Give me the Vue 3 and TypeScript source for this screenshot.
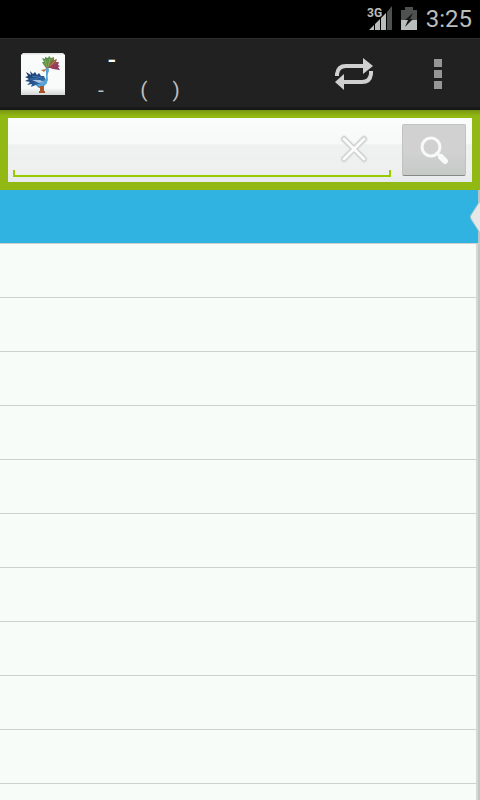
<script setup lang="ts">
import { ref } from 'vue'

const query = ref('')
const selected = ref(0)
const rows = Array.from({ length: 12 }, (_, i) => i)
const title = '      -'
const subtitle = '     -       (    \u2009)'
</script>

<template>
  <div class="screen">
    <header class="status">
      <svg class="signal" width="26" height="26" viewBox="0 0 26 26">
        <path d="M2 24 L7 19 V24Z M8 18 L13 13 V24 H8Z M14 12 L19 7 V24 H14Z" fill="#b9bebc" />
        <path d="M20 6 L25 0 V24 H20Z" fill="#4d5250" />
        <text x="0" y="11">3G</text>
      </svg>
      <svg class="battery" width="16" height="24" viewBox="0 0 16 24">
        <path d="M4 0 H12 V3 H16 V13 H0 V3 H4Z" fill="#4d5250" />
        <path d="M0 13 H16 V23 H0Z" fill="#b9bebc" />
        <path d="M12 6 L4 13 H7 L4 20 L12 12 H9Z" fill="#161816" />
      </svg>
      <time class="clock">3:25</time>
    </header>

    <nav class="bar">
      <svg class="logo" width="44" height="44" viewBox="0 0 44 44">
        <defs>
          <linearGradient id="tile" x1="0" y1="0" x2="0" y2="1">
            <stop offset="0" stop-color="#d8dbd9" />
            <stop offset=".06" stop-color="#fafcfb" />
            <stop offset=".84" stop-color="#f8faf9" />
            <stop offset="1" stop-color="#d2d5d5" />
          </linearGradient>
          <linearGradient id="crest" x1="0" y1="0" x2="1" y2="1">
            <stop offset="0" stop-color="#4f7d4a" />
            <stop offset=".35" stop-color="#5f9a48" />
            <stop offset=".55" stop-color="#9a5a48" />
            <stop offset="1" stop-color="#7c2468" />
          </linearGradient>
          <linearGradient id="body" x1="0" y1="0" x2="1" y2="1">
            <stop offset="0" stop-color="#1b2f5e" />
            <stop offset=".55" stop-color="#27568f" />
            <stop offset="1" stop-color="#4a9bd0" />
          </linearGradient>
        </defs>
        <path d="M2 1 H42 L44 3 V43 H0 V3Z" fill="url(#tile)" />
        <path d="M25 16 L22 12 L21 10 L23 10 L21 6 L24 7 L24 5 L27 6 L28 4 L30 6 L33 5 L33 8 L36 7 L35 10 L38 10 L37 13 L39 14 L37 15 L39 18 L32 17 L29 16Z" fill="url(#crest)" />
        <path d="M26 15 L24 8 M27 15 L29 7" stroke="#7eb35a" stroke-width="1" fill="none" />
        <path d="M29 14 L34 9" stroke="#b58a50" stroke-width="1" />
        <path d="M30 15 L37 16 M30 14 L36 12" stroke="#a83268" stroke-width="1" />
        <path d="M23 24 L20 24 L18 21 L16 23 L14 20 L12 22 L9 19 L10 23 L5 20 L7 24 L4 25 L8 27 L4 29 L9 30 L6 33 L11 32 L10 35 L15 33 L18 36 L22 35 L26 31Z" fill="url(#body)" />
        <path d="M24 17 Q28 13 28 19 Q26 22 27 28 Q25 34 19 35 L15 33 Q22 31 25 26 L25 20Z" fill="#55a4d8" />
        <path d="M11 28 L19 28 L23 30 L18 31Z" fill="#a9c4de" />
        <path d="M11 24 L21 26 M9 27 L17 27" stroke="#3f7cb8" stroke-width="1" />
        <path d="M25 17 L20 18 L23 20Z" fill="#bf6d39" />
        <path d="M20 34 V39 M22 34 V39 M18 40 H24" stroke="#a85528" stroke-width="2" />
      </svg>
      <div class="titles">
        <h1>{{ title }}</h1>
        <p>{{ subtitle }}</p>
      </div>
      <button class="action" type="button" aria-label="Refresh">
        <svg width="40" height="34" viewBox="0 0 40 34">
          <path d="M3 19 V17 Q4 9 12 9 H30" fill="none" stroke="#d0d0d0" stroke-width="4" />
          <path d="M37 14 V17 Q36 25 28 25 H9" fill="none" stroke="#d0d0d0" stroke-width="4" />
          <path d="M29 1 L39 9 L29 17Z M10 17 L1 25 L10 33Z" fill="#d0d0d0" />
        </svg>
      </button>
      <button class="action" type="button" aria-label="More options">
        <svg width="8" height="30" viewBox="0 0 8 30">
          <path d="M0 0H8V8H0Z M0 11H8V19H0Z M0 22H8V30H0Z" fill="#969696" />
        </svg>
      </button>
    </nav>

    <div class="search">
      <form class="panel" @submit.prevent>
        <div class="field">
          <input v-model="query" type="text" aria-label="Search" />
          <button class="clear" type="button" aria-label="Clear" @click="query = ''">
            <svg width="30" height="30" viewBox="0 0 30 30" stroke-linecap="round">
              <path d="M5 4 L25 24 M25 4 L5 24" stroke="#e2e5e3" stroke-width="7" />
              <path d="M5 4 L25 24 M25 4 L5 24" stroke="#cbcdcc" stroke-width="5" />
              <path d="M5 4 L25 24 M25 4 L5 24" stroke="#fafbfa" stroke-width="3" />
            </svg>
          </button>
        </div>
        <button class="go" type="submit" aria-label="Find">
          <svg width="30" height="30" viewBox="0 0 30 30" fill="none" stroke="#f8faf9" stroke-linecap="round">
            <circle cx="12" cy="12" r="9" stroke-width="3" />
            <path d="M18 18 L21 21" stroke-width="3" />
            <path d="M22 22 L26 26" stroke-width="6" />
          </svg>
        </button>
      </form>
    </div>

    <main class="content">
      <ul>
        <li v-for="row in rows" :key="row" :class="{ active: row === selected }" @click="selected = row">
          <svg v-if="row === selected" width="10" height="32" viewBox="0 0 10 32">
            <path d="M10 0 L1 14 Q0 16 1 18 L10 32Z" fill="#e6e8e7" />
            <path d="M10 0 L1 14 Q0 16 1 18 L10 32" fill="none" stroke="#a5c5cf" stroke-width="1" />
          </svg>
        </li>
      </ul>
    </main>
  </div>
</template>

<style>
body {
  margin: 0;
}
</style>

<style scoped>
.screen {
  display: flex;
  flex-direction: column;
  height: 100vh;
  overflow: hidden;
  background: #f7fcf9;
  font-family: Roboto, "Liberation Sans", sans-serif;
}
svg {
  display: block;
}
button {
  display: flex;
  align-items: center;
  justify-content: center;
  padding: 0;
  border: 0;
  background: none;
}
.status {
  flex: none;
  display: flex;
  align-items: center;
  justify-content: flex-end;
  height: 38px;
  padding-right: 8px;
  background: #000;
  color: #b9bebc;
}
.signal text {
  font-size: 12px;
  font-weight: 700;
  fill: #b9bebc;
}
.battery {
  margin: 0 9px 0 8px;
}
.clock {
  font-size: 24px;
  line-height: 38px;
}
.bar {
  flex: none;
  display: flex;
  align-items: center;
  box-sizing: border-box;
  height: 72px;
  padding-left: 21px;
  border-top: 1px solid #2d2d2d;
  border-bottom: 1px solid #141414;
  background: #212121;
  box-shadow: inset 0 -2px #181818;
}
.titles {
  flex: 1;
  padding-left: 7px;
  white-space: pre;
}
h1,
p {
  margin: 0;
  font-weight: 400;
}
h1 {
  font-size: 24px;
  line-height: 32px;
  font-weight: 500;
  color: #fff;
}
p {
  font-size: 21px;
  line-height: 28px;
  color: #bebebe;
}
.action {
  width: 84px;
  height: 68px;
}
.search {
  flex: none;
  padding: 8px;
  background: linear-gradient(#789612, #92b814 6px);
}
.panel {
  display: flex;
  box-sizing: border-box;
  height: 64px;
  padding: 6px 6px 5px 5px;
  gap: 11px;
  background: linear-gradient(#fafdfb, #f7f8f8 40%, #edf2ef 42%, #efeff0 80%, #e6ebed);
}
.field {
  flex: 1;
  display: flex;
  min-width: 0;
  border: solid #99cc00;
  border-width: 0 2px 2px;
  border-image: linear-gradient(transparent 46px, #99cc00 46px) 0 2 2;
}
input {
  flex: 1;
  min-width: 0;
  padding: 0 8px;
  border: 0;
  outline: 0;
  background: none;
  font: 24px Roboto, sans-serif;
}
.clear {
  width: 70px;
}
.go {
  width: 64px;
  height: 52px;
  box-sizing: border-box;
  border: 1px solid #c0c3c2;
  border-bottom-color: #858988;
  border-radius: 2px;
  background: linear-gradient(#d0d1d0 55%, #c5cac7);
}
.content {
  flex: 1;
  min-height: 0;
  overflow: hidden;
  position: relative;
}
.content::after {
  content: "";
  position: absolute;
  inset: 54px 0 0 auto;
  width: 2px;
  border-left: 2px solid #d4d9d6;
  background: #c3c7c5;
}
ul {
  margin: 0;
  padding: 0;
  list-style: none;
}
li {
  display: flex;
  align-items: center;
  justify-content: flex-end;
  box-sizing: border-box;
  height: 54px;
  border-bottom: 1px solid #ccd1ce;
}
.active {
  background: linear-gradient(to left, #b3c7cd 2px, #31b3e1 2px);
}
</style>
